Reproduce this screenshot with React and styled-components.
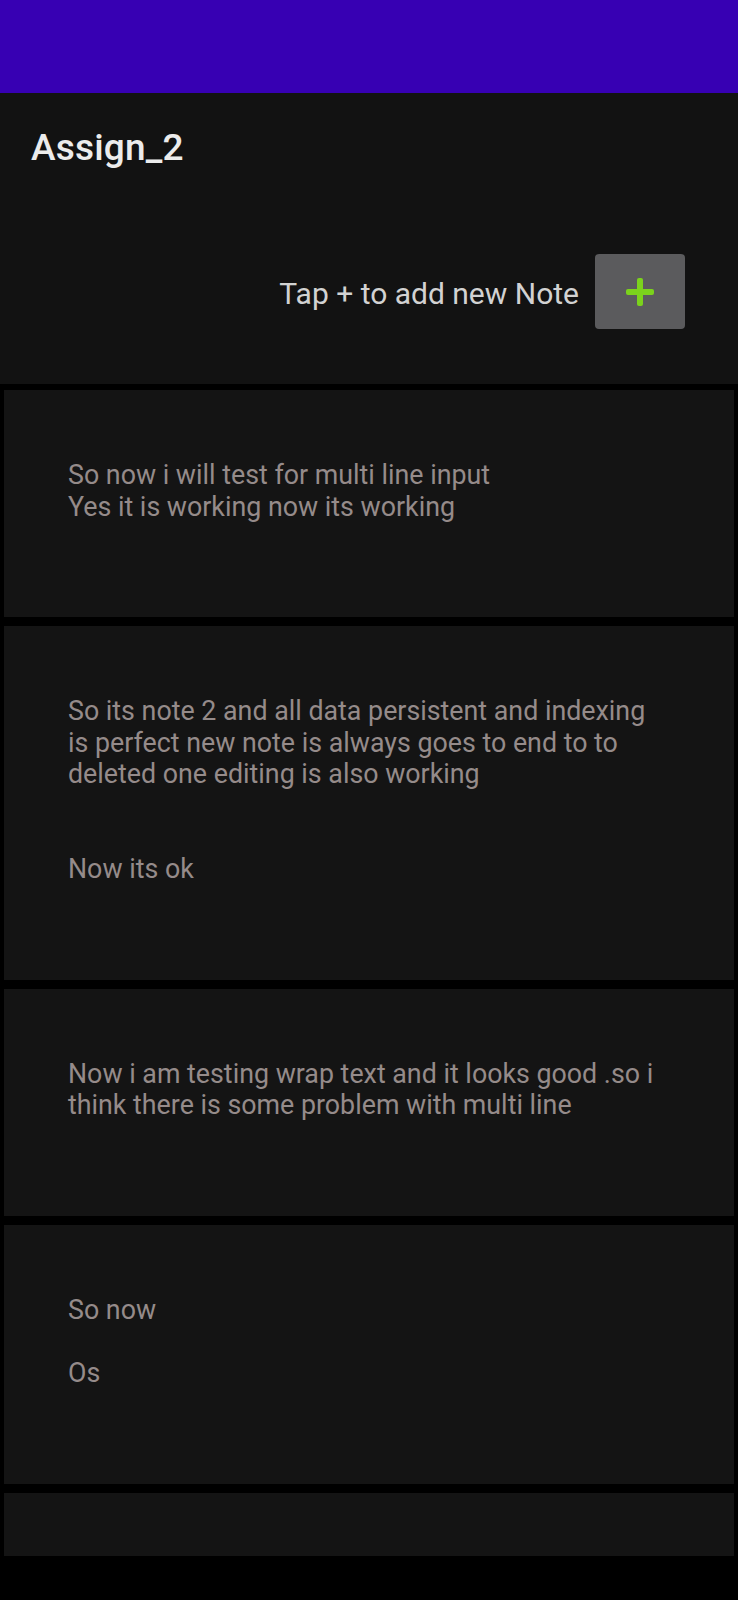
import React from 'react';
import styled, { createGlobalStyle } from 'styled-components';

const GlobalStyle = createGlobalStyle`
  html, body {
    margin: 0;
    padding: 0;
    background: #000;
  }
  body {
    font-family: Roboto, "Noto Sans", sans-serif;
  }
`;

const notes = [
  'So now i will test for multi line input\nYes it is working now its working',
  'So its note 2 and all data persistent and indexing is perfect new note is always goes to end to to deleted one editing is also working\n\n\nNow its ok',
  'Now i am testing wrap text and it looks good .so i think there is some problem with multi line',
  'So now\n\nOs',
];

const App = () => {
  return (
    <>
      <GlobalStyle />
      <StScreen>
        <StStatusBar />
        <StToolbar>
          <h1>Assign_2</h1>
        </StToolbar>
        <StAddRow>
          <span>Tap + to add new Note</span>
          <StAddButton aria-label="add note">
            <svg width="30" height="30" viewBox="0 0 30 30">
              <rect x="12" y="1" width="6" height="28" rx="2" fill="#7bd21c" />
              <rect x="1" y="12" width="28" height="6" rx="2" fill="#7bd21c" />
            </svg>
          </StAddButton>
        </StAddRow>
        <StNoteList>
          {notes.map((text, i) => (
            <StNoteCard key={i}>
              <p>{text}</p>
            </StNoteCard>
          ))}
          <StNoteCard partial />
        </StNoteList>
      </StScreen>
    </>
  );
};

export default App;


const StScreen = styled.div`
  width: 738px;
  height: 1600px;
  overflow: hidden;
  display: flex;
  flex-direction: column;
  background: #000;
`;

const StStatusBar = styled.div`
  height: 93px;
  flex-shrink: 0;
  background-color: #3700b3;
`;

const StToolbar = styled.div`
  height: 105px;
  flex-shrink: 0;
  display: flex;
  align-items: center;
  padding: 4px 0 0 31px;
  box-sizing: border-box;
  background-color: #121212;

  h1 {
    margin: 0;
    color: #ececec;
    font-size: 37px;
    font-weight: 500;
    letter-spacing: 0.2px;
  }
`;

const StAddRow = styled.div`
  display: flex;
  justify-content: flex-end;
  align-items: center;
  gap: 16px;
  padding: 56px 53px 55px 0;
  background-color: #121212;

  span {
    color: #d2d2d2;
    font-size: 30px;
    padding-top: 4px;
  }
`;

const StAddButton = styled.div`
  width: 90px;
  height: 75px;
  display: flex;
  align-items: center;
  justify-content: center;
  border-radius: 4px;
  background-color: #5b5b5d;
`;

const StNoteList = styled.div`
  display: flex;
  flex-direction: column;
  gap: 9px;
  padding: 6px 4px 0;
`;

const StNoteCard = styled.div`
  flex-shrink: 0;
  background-color: #141414;
  padding: ${({ partial }) => (partial ? '0' : '70px 70px 94px 64px')};
  height: ${({ partial }) => (partial ? '63px' : 'auto')};

  p {
    margin: 0;
    white-space: pre-line;
    color: #958b8a;
    font-size: 26.8px;
    line-height: 31.6px;
  }
`;
